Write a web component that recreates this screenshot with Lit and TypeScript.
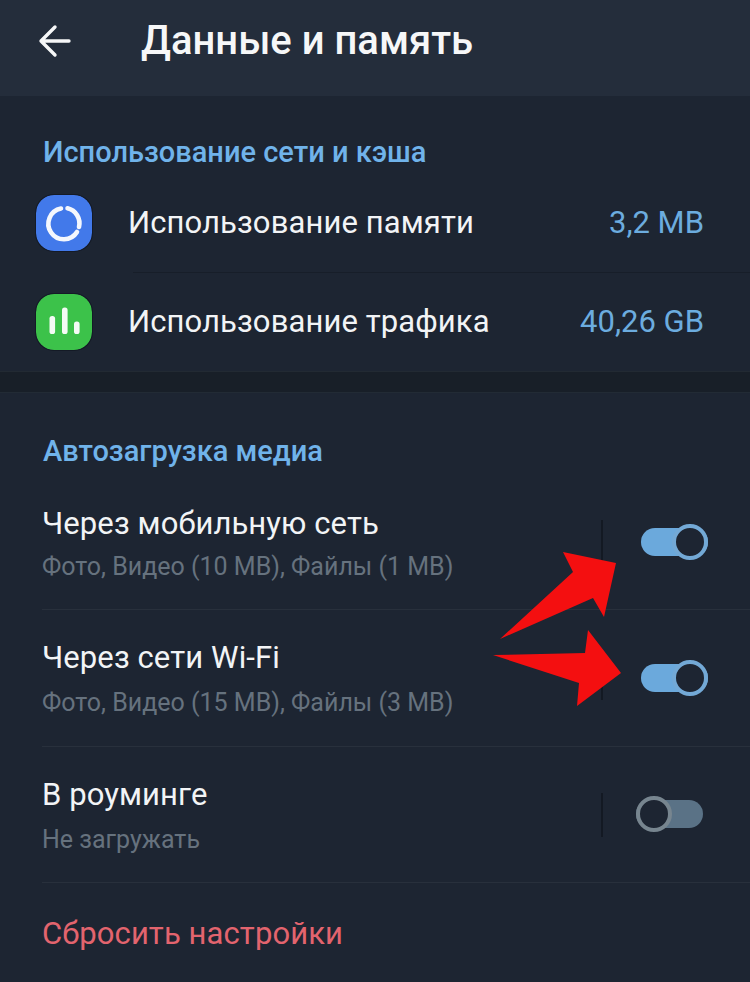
import { LitElement, html, css } from 'lit';
import { customElement, property } from 'lit/decorators.js';

@customElement('app-switch')
export class AppSwitch extends LitElement {
  @property({ type: Boolean, reflect: true }) on = false;

  static styles = css`
    :host {
      position: relative;
      display: block;
      width: 67px;
      height: 36px;
    }
    .track {
      position: absolute;
      top: 4px;
      left: 0;
      right: 0;
      height: 28px;
      border-radius: 14px;
      background: #5a7286;
    }
    .knob {
      position: absolute;
      top: 0;
      left: 0;
      width: 36px;
      height: 36px;
      box-sizing: border-box;
      border-radius: 50%;
      border: 4px solid #77858f;
      background: #1d2532;
    }
    :host([on]) .track {
      background: #6ba9dc;
    }
    :host([on]) .knob {
      left: 31px;
      border-color: #73a9d6;
    }
  `;

  render() {
    return html`<div class="track"></div><div class="knob"></div>`;
  }
}

@customElement('app-root')
export class AppRoot extends LitElement {
  static styles = css`
    :host {
      position: relative;
      display: block;
      width: 750px;
      height: 982px;
      overflow: hidden;
      background: #1d2532;
      font-family: Roboto, "Noto Sans", sans-serif;
      color: #f2f4f6;
    }
    .header {
      display: flex;
      align-items: flex-start;
      height: 96px;
      box-sizing: border-box;
      padding: 19px 0 0 36px;
      background: #242d3b;
    }
    .back {
      width: 38px;
      height: 38px;
      margin: 3px 67px 0 0;
    }
    .header h1 {
      margin: 0;
      font-size: 40px;
      line-height: 44px;
      font-weight: 500;
      color: #f6f7f8;
    }
    .section-title {
      font-size: 29px;
      line-height: 32px;
      font-weight: 500;
      color: #70b3ea;
    }
    .usage {
      height: 275px;
      box-sizing: border-box;
      padding-top: 40px;
    }
    .usage .section-title {
      padding-left: 43px;
    }
    .usage-rows {
      margin-top: 6px;
      display: flex;
      flex-direction: column;
    }
    .usage-row {
      display: flex;
      align-items: center;
      height: 98px;
      padding: 0 46px 0 36px;
    }
    .usage-row .ico {
      width: 56px;
      height: 56px;
      margin-right: 36px;
      border-radius: 18px;
      box-shadow: 0 0 0 1px #141a26;
    }
    .usage-row .label {
      flex: 1;
      font-size: 31px;
      letter-spacing: 0.1px;
      margin-top: -2px;
    }
    .usage-row .value {
      font-size: 31px;
      color: #6cacdf;
      margin-top: -2px;
    }
    .line {
      height: 1px;
      margin-left: 133px;
      background: #171e29;
    }
    .gap {
      height: 22px;
      background: #181f28;
      border-top: 1px solid #222a33;
      border-bottom: 1px solid #222b35;
      box-sizing: border-box;
    }
    .media {
      box-sizing: border-box;
      padding-top: 42px;
    }
    .media .section-title {
      padding: 0 0 0 43px;
      margin-bottom: 39px;
    }
    .row {
      display: flex;
      align-items: center;
      height: 136.5px;
      margin-left: 42px;
      border-bottom: 1px solid #28303c;
      box-sizing: border-box;
    }
    .first {
      height: 104px;
      align-items: flex-start;
    }
    .row .text {
      flex: 1;
      align-self: flex-start;
      padding-top: 30px;
    }
    .first .text {
      padding-top: 0;
    }
    .row .name {
      font-size: 31px;
      line-height: 36px;
      letter-spacing: 0.1px;
    }
    .row .sub {
      margin-top: 12px;
      font-size: 25px;
      line-height: 30px;
      color: #66727e;
    }
    .first .sub {
      margin-top: 10px;
    }
    .sep {
      width: 2px;
      height: 44px;
      margin-right: 38px;
      background: #131923;
    }
    .row app-switch {
      margin-right: 42px;
    }
    .row.off .sep {
      margin-right: 33px;
    }
    .row.off app-switch {
      margin-right: 47px;
    }
    .row .sep {
      margin-top: 1px;
    }
    .first .sep {
      margin-top: 14px;
    }
    .first app-switch {
      margin-top: 18px;
    }
    .reset {
      padding: 29px 0 0 42px;
      font-size: 31px;
      line-height: 44px;
      letter-spacing: 0.1px;
      color: #e3646e;
    }
    .arrows {
      position: absolute;
      top: 0;
      left: 0;
      width: 750px;
      height: 982px;
      pointer-events: none;
    }
  `;

  private renderRow(name: string, sub: string, on: boolean, first = false) {
    return html`
      <div class="row ${first ? 'first' : ''} ${on ? '' : 'off'}">
        <div class="text">
          <div class="name">${name}</div>
          <div class="sub">${sub}</div>
        </div>
        <div class="sep"></div>
        <app-switch ?on=${on}></app-switch>
      </div>
    `;
  }

  render() {
    return html`
      <div class="header">
        <svg class="back" viewBox="0 0 38 38" fill="none" stroke="#f6f7f8" stroke-width="3.4" stroke-linecap="round" stroke-linejoin="round">
          <path d="M5 19H33M19 5L5 19L19 33" />
        </svg>
        <h1>Данные и память</h1>
      </div>

      <div class="usage">
        <div class="section-title">Использование сети и кэша</div>
        <div class="usage-rows">
          <div class="usage-row">
            <svg class="ico" viewBox="0 0 56 56">
              <rect width="56" height="56" rx="18" fill="#4279ea" />
              <g fill="none" stroke="#f4f7fd" stroke-width="4.6" stroke-linecap="round">
                <path d="M25 13.5A15.5 15.5 0 1 0 41 37" />
                <path d="M31.5 13.3A15.5 15.5 0 0 1 43 32" />
              </g>
            </svg>
            <div class="label">Использование памяти</div>
            <div class="value">3,2 MB</div>
          </div>
          <div class="line"></div>
          <div class="usage-row">
            <svg class="ico" viewBox="0 0 56 56">
              <rect width="56" height="56" rx="18" fill="#3cc24a" />
              <g fill="#f4fbf5">
                <rect x="13.5" y="22" width="5.6" height="18" rx="2.6" />
                <rect x="26" y="13.5" width="5.6" height="26.5" rx="2.6" />
                <rect x="38" y="27.5" width="5.6" height="12.5" rx="2.6" />
              </g>
            </svg>
            <div class="label">Использование трафика</div>
            <div class="value">40,26 GB</div>
          </div>
        </div>
      </div>

      <div class="gap"></div>

      <div class="media">
        <div class="section-title">Автозагрузка медиа</div>
        ${this.renderRow('Через мобильную сеть', 'Фото, Видео (10 MB), Файлы (1 MB)', true, true)}
        ${this.renderRow('Через сети Wi-Fi', 'Фото, Видео (15 MB), Файлы (3 MB)', true)}
        ${this.renderRow('В роуминге', 'Не загружать', false)}
        <div class="reset">Сбросить настройки</div>
      </div>

      <svg class="arrows" viewBox="0 0 750 982">
        <polygon fill="#f40f10" points="500,639 573,572 563,552 616,563 604,617 593,598" />
        <polygon fill="#f40f10" points="493,655 585,653 588,630 621,673 577,706 579,683" />
      </svg>
    `;
  }
}
